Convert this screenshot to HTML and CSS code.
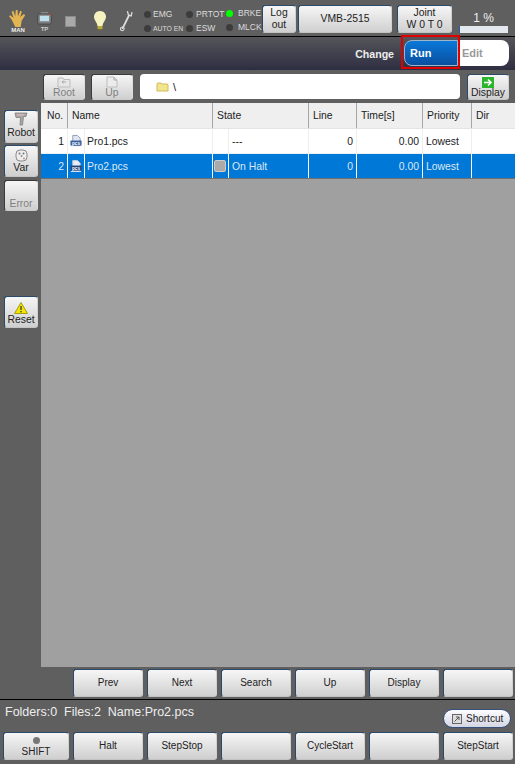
FILE: index.html
```html
<!DOCTYPE html>
<html lang="en">
<head>
  <meta charset="UTF-8">
  <title>Program list</title>
  <meta name="viewport" content="width=device-width, initial-scale=1.0">
  <link rel="stylesheet" href="styles.css">
</head>
<body>
  <div class="app">

    <div class="top-bar">
      <div class="mode-icon icon-man">
        <svg width="20" height="18" viewBox="0 0 22 20"><path d="M8 20 L4 12 L1 8 L2.5 7 L6 10 L4 3 L5.8 2 L8 8 L8.5 1 L10.5 1 L11 8 L13.5 2 L15.3 3 L13.5 9 L17.5 5.5 L19 7 L15 13 L14 20 Z" fill="#e3b552"/></svg>
        <span>MAN</span>
      </div>
      <div class="mode-icon icon-tp">
        <svg width="15" height="13" viewBox="0 0 16 14"><rect x="4" y="0" width="8" height="3" fill="#8a8a8a"/><rect x="0.5" y="2" width="15" height="11" rx="2" fill="#7c7c7c" stroke="#484848"/><rect x="3" y="4" width="10" height="6" fill="#bfe0ee"/><rect x="12" y="2" width="3" height="1" fill="#c44"/></svg>
        <span>TP</span>
      </div>
      <div class="stop-square"></div>
      <svg class="bulb" width="14" height="21" viewBox="0 0 14 21"><path d="M7 1 C3 1 1 4 1 7 C1 10 4 12 4.5 16 L9.5 16 C10 12 13 10 13 7 C13 4 11 1 7 1 Z" fill="#f7f3c0"/><rect x="4.5" y="16" width="5" height="3" fill="#b9a83c"/><rect x="5.5" y="19" width="3" height="1.5" fill="#77702c"/></svg>
      <svg class="wrench" width="13" height="23" viewBox="0 0 14 24"><path d="M2.5 21 L10 6" stroke="#dedede" stroke-width="2" fill="none"/><path d="M8 2 L9 6 L12 7 L13 3" stroke="#dedede" stroke-width="1.4" fill="none"/><circle cx="2.5" cy="21" r="2" fill="none" stroke="#dedede" stroke-width="1.1"/></svg>

      <div class="leds">
        <div class="led-col col-a">
          <div class="led-item"><i class="led"></i>EMG</div>
          <div class="led-item small"><i class="led"></i>AUTO EN</div>
        </div>
        <div class="led-col col-b">
          <div class="led-item"><i class="led"></i>PRTOT</div>
          <div class="led-item low"><i class="led"></i>ESW</div>
        </div>
        <div class="led-col col-c">
          <div class="led-item"><i class="led on"></i>BRKE</div>
          <div class="led-item"><i class="led"></i>MLCK</div>
        </div>
      </div>

      <button class="btn btn-logout">Log<br>out</button>
      <button class="btn btn-robot">VMB-2515</button>
      <button class="btn btn-joint">Joint<br>W 0 T 0</button>
      <div class="speed">
        <div class="speed-val">1 %</div>
        <div class="speed-bar"><div class="speed-fill" style="width:2%"></div></div>
      </div>
    </div>

    <div class="change-bar">
      <span class="change-label">Change</span>
      <div class="run-edit">
        <div class="run-frame"><div class="seg-run">Run</div></div>
        <div class="seg-edit">Edit</div>
      </div>
    </div>

    <div class="path-bar">
      <button class="btn btn-path disabled">
        <svg width="14" height="11" viewBox="0 0 14 11"><path d="M1 1 H6 L7 2.5 H13 V10 H1 Z" fill="#e6e6e6" stroke="#bdbdbd"/><path d="M9 5 H5 L6.5 3.8 M5 5 L6.5 6.2" stroke="#aaa" fill="none"/></svg>
        Root
      </button>
      <button class="btn btn-path disabled btn-up">
        <svg width="12" height="12" viewBox="0 0 12 12"><path d="M1 1 H8 L11 4 V11 H1 Z" fill="#ececec" stroke="#bdbdbd"/><path d="M8 1 V4 H11" stroke="#aaa" fill="none"/></svg>
        Up
      </button>
      <div class="path-box">
        <svg width="13" height="10" viewBox="0 0 13 10"><path d="M1 2 Q1 1 2 1 H5 L6 2 H11 Q12 2 12 3 V9 H1 Z" fill="#f3e58f" stroke="#cdb95a"/></svg>
        <span>\</span>
      </div>
      <button class="btn btn-path btn-display">
        <svg width="12" height="11" viewBox="0 0 12 11"><rect width="12" height="11" fill="#2cb52c"/><path d="M2 5.5 H9 M6 2.5 L9 5.5 L6 8.5" stroke="#fff" stroke-width="1.6" fill="none"/></svg>
        Display
      </button>
    </div>

    <div class="main">
      <div class="side">
        <button class="btn side-btn side-robot">
          <svg width="14" height="15" viewBox="0 0 14 15"><path d="M1 1 H13 L12 4.5 H9.5 L8.5 13 H6 L6.5 5.5 H2 Z" fill="#a8a8a8" stroke="#7d7d7d" stroke-width="0.8"/><rect x="3" y="2" width="7" height="1.5" fill="#d9b6b6"/></svg>
          Robot
        </button>
        <button class="btn side-btn side-var">
          <svg width="13" height="13" viewBox="0 0 13 13"><rect x="1" y="1" width="11" height="11" rx="4" fill="#eee" stroke="#8a8a8a"/><circle cx="4.5" cy="4.5" r="1" fill="#777"/><circle cx="8.5" cy="4.5" r="1" fill="#777"/><circle cx="6.5" cy="7" r="0.9" fill="#8a8a8a"/><circle cx="9" cy="9.5" r="1" fill="#b98"/></svg>
          Var
        </button>
        <button class="btn side-btn side-error disabled">Error</button>
        <button class="btn side-btn side-reset">
          <svg width="14" height="12" viewBox="0 0 14 12"><path d="M7 0.5 L13.5 11.5 H0.5 Z" fill="#f2e600" stroke="#a89c10"/><rect x="6.3" y="4" width="1.4" height="4" fill="#444"/><rect x="6.3" y="9" width="1.4" height="1.4" fill="#444"/></svg>
          Reset
        </button>
      </div>

      <div class="list">
        <div class="row head">
          <div class="cell c-no">No.</div>
          <div class="cell c-name">Name</div>
          <div class="cell c-state">State</div>
          <div class="cell c-line">Line</div>
          <div class="cell c-time">Time[s]</div>
          <div class="cell c-prio">Priority</div>
          <div class="cell c-dir">Dir</div>
        </div>
        <div class="row">
          <div class="cell c-no num">1</div>
          <div class="cell c-icon">
            <svg width="13" height="14" viewBox="0 0 13 14"><path d="M3 1 H8 L11 4 V12 H3 Z" fill="#dfe6f2" stroke="#8a9ab8"/><rect x="0.5" y="6.5" width="12" height="5.5" fill="#3a5f9e"/><text x="6.5" y="11" class="pcs-tag">pcs</text></svg>
          </div>
          <div class="cell c-file">Pro1.pcs</div>
          <div class="cell c-led"></div>
          <div class="cell c-statetext">---</div>
          <div class="cell c-line num">0</div>
          <div class="cell c-time num">0.00</div>
          <div class="cell c-prio">Lowest</div>
          <div class="cell c-dir"></div>
        </div>
        <div class="row selected">
          <div class="cell c-no num">2</div>
          <div class="cell c-icon">
            <svg width="13" height="14" viewBox="0 0 13 14"><path d="M3 1 H8 L11 4 V12 H3 Z" fill="#e8eef6" stroke="#c0cce0"/><rect x="0.5" y="6.5" width="12" height="5.5" fill="#24457e"/><text x="6.5" y="11" class="pcs-tag">pcs</text><path d="M1 13 H12" stroke="#e8eef6"/></svg>
          </div>
          <div class="cell c-file">Pro2.pcs</div>
          <div class="cell c-led"><i class="halt-led"></i></div>
          <div class="cell c-statetext">On Halt</div>
          <div class="cell c-line num">0</div>
          <div class="cell c-time num">0.00</div>
          <div class="cell c-prio">Lowest</div>
          <div class="cell c-dir"></div>
        </div>
        <div class="list-empty"></div>
      </div>
    </div>

    <div class="pager">
      <button class="btn key">Prev</button>
      <button class="btn key">Next</button>
      <button class="btn key">Search</button>
      <button class="btn key">Up</button>
      <button class="btn key">Display</button>
      <button class="btn key"></button>
    </div>

    <div class="status">
      <span class="status-text">Folders:0&nbsp; Files:2&nbsp; Name:Pro2.pcs</span>
      <button class="shortcut">
        <svg width="10" height="10" viewBox="0 0 10 10"><rect x="0.5" y="0.5" width="9" height="9" fill="#ddd" stroke="#666"/><path d="M2.5 7.5 L7 3 M4 3 H7 V6" stroke="#555" fill="none"/></svg>
        Shortcut
      </button>
    </div>

    <div class="softkeys">
      <button class="btn key key-shift"><i class="led shift-led"></i>SHIFT</button>
      <button class="btn key">Halt</button>
      <button class="btn key">StepStop</button>
      <button class="btn key"></button>
      <button class="btn key">CycleStart</button>
      <button class="btn key"></button>
      <button class="btn key">StepStart</button>
    </div>

  </div>
</body>
</html>
```

FILE: styles.css
```css
* {
  box-sizing: border-box;
}

html, body {
  margin: 0;
  height: 100%;
}

body {
  font-family: "Liberation Sans", Arial, sans-serif;
  font-size: 10px;
  background: #5f5f5f;
  color: #222;
  overflow: hidden;
}

.app {
  display: flex;
  flex-direction: column;
  width: 515px;
  height: 764px;
}

.btn {
  font-family: inherit;
  font-size: 10.4px;
  color: #222;
  padding: 0;
  border: 1px solid #1c3c60;
  border-color: #2a4a6c #d0d0d0 #c4c4c4 #2a4a6c;
  border-radius: 3px;
  background: linear-gradient(#f6f6f6, #cfcfcf);
  line-height: 12.5px;
}

.btn.disabled {
  color: #808080;
  border-color: #3a3a3a #ddd #ccc #3a3a3a;
}

/* top status bar */
.top-bar {
  display: flex;
  align-items: flex-start;
  height: 37px;
  border-bottom: 1px solid #000;
  flex-shrink: 0;
}

.mode-icon {
  display: flex;
  flex-direction: column;
  align-items: center;
  font-size: 6px;
  font-weight: bold;
  color: #eee;
  line-height: 7px;
}

.icon-man {
  width: 20px;
  margin: 9px 0 0 8px;
}

.icon-tp {
  width: 15px;
  margin: 12px 0 0 9px;
}

.icon-tp span {
  margin-top: 1px;
  color: #ccc;
}

.stop-square {
  width: 11px;
  height: 11px;
  margin: 16px 0 0 13px;
  background: #a9a9a9;
  border: 1px solid #8b8b8b;
}

.bulb {
  margin: 10px 0 0 17px;
}

.wrench {
  margin: 9px 0 0 13px;
}

.leds {
  display: flex;
  width: 118px;
  margin-left: 11px;
  color: #dcdcdc;
  font-size: 8.5px;
}

.led-col {
  display: flex;
  flex-direction: column;
}

.col-a {
  width: 42px;
  padding-top: 9px;
  gap: 4px;
}

.col-b {
  width: 40px;
  padding-top: 9px;
  gap: 4px;
}

.col-c {
  padding-top: 8px;
  gap: 4px;
}

.led-item {
  display: flex;
  align-items: center;
  gap: 2px;
  height: 10px;
  white-space: nowrap;
}

.col-b .led-item {
  gap: 3px;
}

.col-c .led-item {
  gap: 5px;
}

.led-item.small {
  font-size: 6.8px;
}

.led-item.low {
  line-height: 13px;
}

.led {
  display: inline-block;
  flex-shrink: 0;
  width: 7px;
  height: 7px;
  border-radius: 50%;
  background: #3c3c3c;
}

.led.on {
  background: #0f0;
}

.btn-logout {
  width: 34px;
  height: 28px;
  margin: 5px 0 0 0;
}

.btn-robot {
  width: 94px;
  height: 28px;
  margin: 5px 0 0 2px;
}

.btn-joint {
  width: 55px;
  height: 28px;
  margin: 5px 0 0 5px;
}

.speed {
  width: 49px;
  margin: 12px 0 0 7px;
  color: #eee;
  text-align: center;
}

.speed-val {
  font-size: 12px;
  line-height: 13px;
}

.speed-bar {
  height: 7px;
  margin-top: 1px;
  background: #e3e8ee;
}

.speed-fill {
  height: 100%;
  background: #1a5fb0;
}

/* run / edit switch */
.change-bar {
  display: flex;
  align-items: flex-start;
  justify-content: flex-end;
  height: 33px;
  padding-right: 6px;
  flex-shrink: 0;
  background: linear-gradient(#55555a, #2e2e42);
}

.change-label {
  margin: 11px 7px 0 0;
  color: #eee;
  font-size: 10.6px;
  line-height: 12px;
  font-weight: bold;
}

.run-edit {
  display: flex;
  align-items: flex-start;
  margin-top: -2px;
}

.run-frame {
  padding: 3px 0 1px 1px;
  border: 2px solid #e00000;
}

.seg-run {
  width: 54px;
  height: 26px;
  padding-left: 5px;
  line-height: 24px;
  font-size: 11px;
  font-weight: bold;
  color: #fff;
  border: 1px solid #9fb4c8;
  border-radius: 8px 0 0 8px;
  background: linear-gradient(#0a78d8, #0a4fa0);
}

.seg-edit {
  width: 49px;
  height: 26px;
  margin-top: 5px;
  padding-left: 2px;
  line-height: 26px;
  font-size: 11px;
  font-weight: bold;
  color: #999;
  background: #fff;
  border-radius: 0 8px 8px 0;
}

/* path row */
.path-bar {
  display: flex;
  align-items: flex-start;
  height: 33px;
  padding: 4px 0 0 43px;
  flex-shrink: 0;
}

.btn-path {
  display: flex;
  flex-direction: column;
  align-items: center;
  justify-content: flex-end;
  width: 42px;
  height: 26px;
  padding-bottom: 1px;
  line-height: 10px;
}

.btn-up {
  margin-left: 6px;
}

.path-box {
  display: flex;
  align-items: center;
  gap: 4px;
  width: 320px;
  height: 25px;
  margin-left: 7px;
  padding-left: 16px;
  background: #fff;
  border-radius: 4px;
  color: #222;
  font-size: 11px;
}

.btn-display {
  margin-left: 7px;
}

/* left column + program list */
.main {
  display: flex;
  flex: 1;
  min-height: 0;
}

.side {
  display: flex;
  flex-direction: column;
  width: 41px;
  padding: 7px 0 0 4px;
  flex-shrink: 0;
}

.side-btn {
  display: flex;
  flex-direction: column;
  align-items: center;
  justify-content: flex-end;
  width: 34px;
  padding-bottom: 1px;
}

.side-robot {
  height: 33px;
  padding-bottom: 3px;
}

.side-var {
  height: 32px;
  margin-top: 2px;
  padding-bottom: 2px;
}

.side-error {
  height: 31px;
  margin-top: 3px;
  padding-bottom: 0;
}

.side-reset {
  height: 32px;
  margin-top: 85px;
}

.list {
  display: flex;
  flex-direction: column;
  flex: 1;
  background: #a0a0a0;
}

.row {
  display: flex;
  height: 25px;
  background: #fff;
  font-size: 10.4px;
  line-height: 25px;
  border-bottom: 1px solid #eee;
}

.row.head {
  height: 26px;
  background: #efefef;
  border-bottom: 1px solid #e4e4e4;
}

.row.selected {
  background: #0078d7;
  color: #dde8f4;
  border-bottom: 1px solid #707070;
}

.cell {
  padding: 0 3px;
  border-right: 1px solid #eee;
  white-space: nowrap;
}

.head .cell {
  padding: 0 4px;
  border-right: 1px solid #a6a6a6;
}

.head .c-no {
  padding-left: 6px;
}

.selected .cell {
  border-right-color: #fff;
}

.num {
  text-align: right;
}

.c-no {
  width: 27px;
}

.c-name {
  width: 145px;
}

.c-icon {
  display: flex;
  align-items: center;
  width: 17px;
  padding: 0 2px;
}

.c-file {
  width: 128px;
  padding-left: 2px;
}

.c-state {
  width: 96px;
}

.c-led {
  display: flex;
  align-items: center;
  width: 16px;
  padding: 0 1px;
}

.c-statetext {
  width: 80px;
}

.c-line {
  width: 48px;
}

.c-time {
  width: 66px;
}

.c-prio {
  width: 49px;
}

.c-dir {
  flex: 1;
  border-right: 0;
}

.head .c-dir {
  border-right: 0;
}

.pcs-tag {
  font-family: "Liberation Sans", Arial, sans-serif;
  font-size: 5px;
  font-weight: bold;
  fill: #fff;
  text-anchor: middle;
}

.halt-led {
  display: block;
  width: 12px;
  height: 12px;
  border-radius: 2px;
  background: #aaa;
  border: 1px solid #ccc;
}

.list-empty {
  flex: 1;
}

/* bottom keys */
.pager {
  display: flex;
  gap: 4px;
  height: 33px;
  padding: 2px 2px 0 73px;
  border-bottom: 1px solid #000;
  flex-shrink: 0;
}

.key {
  flex: 1;
  height: 28px;
  font-size: 10px;
}

.status {
  display: flex;
  justify-content: space-between;
  height: 32px;
  padding: 5px 4px 0 5px;
  flex-shrink: 0;
}

.status-text {
  color: #eee;
  font-size: 12.5px;
  line-height: 14px;
}

.shortcut {
  display: flex;
  align-items: center;
  gap: 4px;
  height: 19px;
  width: 68px;
  margin-top: 4px;
  padding: 0 0 0 8px;
  font-family: inherit;
  font-size: 10px;
  color: #222;
  border: 1px solid #34507c;
  border-radius: 10px;
  background: linear-gradient(#fbfbff, #d6d6e4);
}

.softkeys {
  display: flex;
  gap: 4px;
  height: 32px;
  padding: 0 2px 0 3px;
  flex-shrink: 0;
}

.key-shift {
  display: flex;
  flex: 0 0 66px;
  flex-direction: column;
  align-items: center;
  justify-content: space-between;
  padding: 4px 0 1px;
}

.shift-led {
  background: #777;
}
```
